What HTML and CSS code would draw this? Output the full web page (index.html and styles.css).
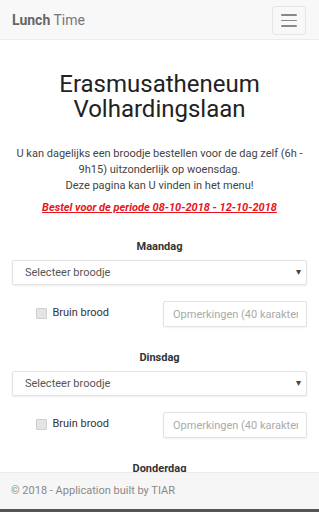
FILE: index.html
```html
<!DOCTYPE html>
<html lang="nl">
<head>
    <meta charset="UTF-8">
    <title>Lunch Time</title>
    <link rel="stylesheet" href="styles.css">
</head>
<body>
    <nav class="navbar">
        <a class="brand" href="#"><b>Lunch</b> Time</a>
        <button class="toggler" type="button" aria-label="Menu">
            <span class="bar"></span>
            <span class="bar"></span>
            <span class="bar"></span>
        </button>
    </nav>

    <main class="content">
        <h1 class="school">Erasmusatheneum Volhardingslaan</h1>
        <p class="intro">U kan dagelijks een broodje bestellen voor de dag zelf (6h - 9h15) uitzonderlijk op woensdag.<br>Deze pagina kan U vinden in het menu!</p>
        <p class="period">Bestel voor de periode 08-10-2018 - 12-10-2018</p>

        <!-- one block per day -->
        <section class="day">
            <h2>Maandag</h2>
            <div class="select-wrap">
                <select>
                    <option>Selecteer broodje</option>
                </select>
            </div>
            <div class="options">
                <label class="check"><input type="checkbox"> Bruin brood</label>
                <input class="remark" type="text" placeholder="Opmerkingen (40 karakters)" maxlength="40">
            </div>
        </section>

        <section class="day">
            <h2>Dinsdag</h2>
            <div class="select-wrap">
                <select>
                    <option>Selecteer broodje</option>
                </select>
            </div>
            <div class="options">
                <label class="check"><input type="checkbox"> Bruin brood</label>
                <input class="remark" type="text" placeholder="Opmerkingen (40 karakters)" maxlength="40">
            </div>
        </section>

        <section class="day">
            <h2>Donderdag</h2>
        </section>
    </main>

    <footer class="footer">
        <p>&copy; 2018 - Application built by TIAR</p>
    </footer>
</body>
</html>
```

FILE: styles.css
```css
/* Lunch Time */
body {
    font-family: Roboto, "Liberation Sans", Arial, sans-serif;
    background-color: #fff;
    color: #333;
    margin: 0;
    overflow: hidden;
}

.navbar {
    display: flex;
    justify-content: space-between;
    align-items: center;
    height: 39px;
    padding: 0 13px 0 12px;
    background-color: #f8f8f8;
    border-bottom: 1px solid #ececec;
}

.brand {
    font-size: 14px;
    color: #777;
    text-decoration: none;
}

.brand b {
    color: #666;
}

.toggler {
    display: flex;
    flex-direction: column;
    gap: 4px;
    width: 34px;
    height: 29px;
    padding: 7px 8px;
    margin-top: 2px;
    background: #f8f8f8;
    border: 1px solid #e4e4e4;
    border-radius: 3px;
    justify-content: center;
}

.toggler .bar {
    display: block;
    height: 2px;
    background-color: #888;
    border-radius: 1px;
}

.content {
    padding: 0 12px 60px;
    text-align: center;
}

.school {
    margin: 32px 0 0;
    font-size: 24px;
    line-height: 25px;
    font-weight: 400;
    color: #222;
}

.intro {
    margin: 24px 0 0;
    font-size: 11px;
    line-height: 16px;
    color: #444;
}

.period {
    margin: 7px 0 0;
    font-size: 11px;
    font-weight: bold;
    font-style: italic;
    text-decoration: underline;
    color: #e8141b;
}

.day h2 {
    margin: 26px 0 7px;
    font-size: 11px;
    font-weight: bold;
    color: #333;
}

.day + .day h2 {
    margin-top: 24px;
}

.select-wrap {
    position: relative;
}

.select-wrap::after {
    content: "\25BE";
    position: absolute;
    right: 6px;
    top: 6px;
    font-size: 10px;
    color: #444;
    pointer-events: none;
}

select {
    -webkit-appearance: none;
    appearance: none;
    width: 100%;
    height: 25px;
    padding: 0 12px;
    font-family: inherit;
    font-size: 11px;
    color: #555;
    background: #fff;
    border: 1px solid #e2e2e2;
    border-radius: 2px;
    box-shadow: 0 1px 2px rgba(0, 0, 0, 0.08);
}

.options {
    display: grid;
    grid-template-columns: 1fr 1fr;
    align-items: center;
    margin-top: 16px;
}

.check {
    display: flex;
    align-items: center;
    justify-content: center;
    gap: 5px;
    padding-right: 26px;
    margin-top: -3px;
    font-size: 11px;
    color: #333;
}

.check input {
    -webkit-appearance: none;
    appearance: none;
    width: 11px;
    height: 11px;
    margin: 2px 0 0;
    background-color: #e4e4e4;
    border: 1px solid #cfcfcf;
    border-radius: 1px;
}

.remark {
    box-sizing: border-box;
    width: 144px;
    justify-self: end;
    height: 26px;
    padding: 0 8px 0 9px;
    font-family: inherit;
    font-size: 11px;
    border: 1px solid #e2e2e2;
    border-radius: 2px;
    box-shadow: 0 1px 2px rgba(0, 0, 0, 0.06);
}

.remark::placeholder {
    color: #aaa;
}

.footer {
    position: fixed;
    left: 0;
    right: 0;
    bottom: 0;
    height: 36px;
    background-color: #f6f6f6;
    border-top: 1px solid #ececec;
    border-bottom: 3px solid #555;
}

.footer p {
    margin: 0;
    padding: 11px 11px 0;
    font-size: 11px;
    color: #888;
}
```
